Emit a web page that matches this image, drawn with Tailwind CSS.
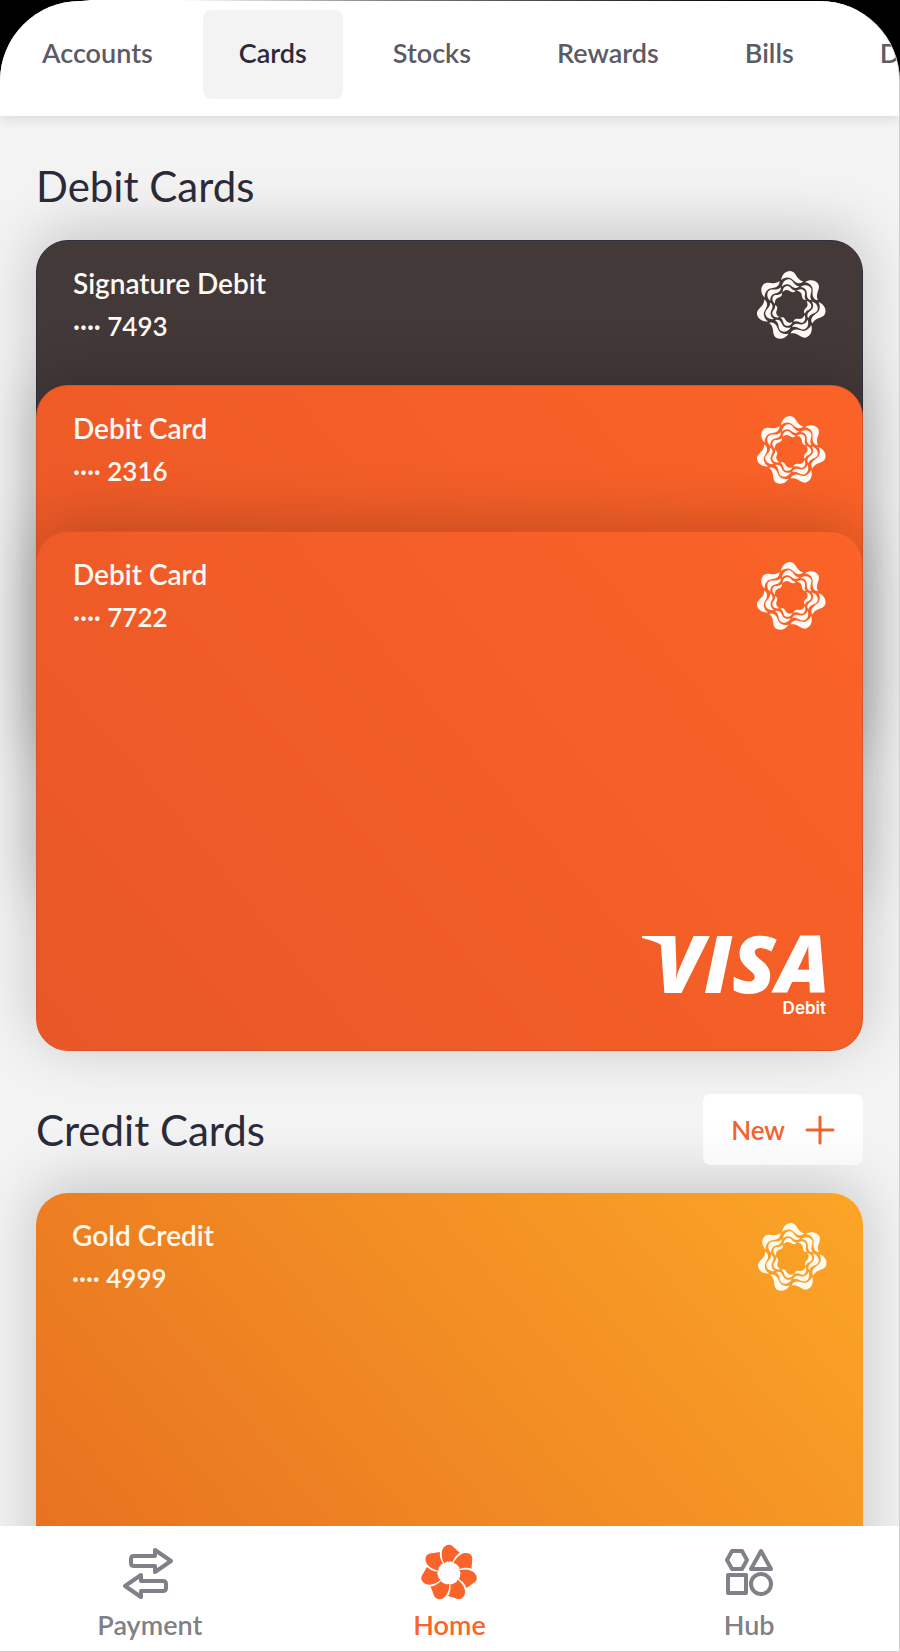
<!DOCTYPE html>
<html lang="en">
<head>
  <meta charset="UTF-8">
  <meta name="viewport" content="width=device-width, initial-scale=1.0">
  <title>Cards</title>
  <script src="https://cdn.jsdelivr.net/npm/@tailwindcss/browser@4"></script>
</head>
<body class="bg-black font-['Lato',sans-serif] text-[28px] leading-8 font-semibold">
  <!-- Shared shapes -->
  <svg class="hidden">
    <defs>
      <path id="wave" d="M-29-75C-27-91-16-102-3-102C9-102 13-91 19-83C24-76 30-73 36-72C30-65 20-65 13-70C5-76 0-83-9-83C-18-83-24-80-29-75Z" />
      <g id="wave-set">
        <use href="#wave" />
        <use href="#wave" transform="rotate(-4) scale(.77)" />
        <use href="#wave" transform="rotate(-10) scale(.58)" />
      </g>
      <symbol id="rosette" viewBox="-102 -102 204 204">
        <use href="#wave-set" />
        <use href="#wave-set" transform="rotate(51.43)" />
        <use href="#wave-set" transform="rotate(102.86)" />
        <use href="#wave-set" transform="rotate(154.29)" />
        <use href="#wave-set" transform="rotate(205.71)" />
        <use href="#wave-set" transform="rotate(257.14)" />
        <use href="#wave-set" transform="rotate(308.57)" />
      </symbol>
      <path id="petal" d="M-15-29C-20-40-24-50-22-64C-20-78-10-87 0-87C8-87 13-81 19-75L33-62C23-56 15-46 11-32C7-36 3-37-1-34C-5-37-10-34-15-29Z" />
    </defs>
  </svg>

  <div class="min-h-screen flex flex-col bg-[linear-gradient(90deg,#000_9%,#fff_10%,#fff_20%,#777_45%,#000_85%)] bg-[length:100%_81px] bg-no-repeat pt-px">
    <div class="h-[1651px] max-h-[calc(100vh-1px)] flex flex-col flex-1 overflow-hidden rounded-t-[80px] bg-[#f3f3f3] border-r border-b border-[#cfcfcf]">
      <!-- Tabs -->
      <nav class="relative z-10 shrink-0 flex gap-3.5 overflow-hidden bg-white pl-1.5 pt-[9px] pb-[17px] text-[27px] text-[#5b5b64] shadow-[0_2px_12px_rgba(0,0,0,0.12)]">
        <button class="shrink-0 h-[89px] px-9 pb-1 rounded-lg">Accounts</button>
        <button class="shrink-0 h-[89px] px-9 pb-1 rounded-lg bg-[#f3f3f3] text-[#2c2a38]">Cards</button>
        <button class="shrink-0 h-[89px] px-9 pb-1 rounded-lg">Stocks</button>
        <button class="shrink-0 h-[89px] px-9 pb-1 rounded-lg">Rewards</button>
        <button class="shrink-0 h-[89px] px-9 pb-1 rounded-lg">Bills</button>
        <button class="shrink-0 h-[89px] px-9 pb-1 rounded-lg">D</button>
      </nav>

      <main class="flex-1 min-h-0 overflow-hidden px-9">
        <!-- Debit cards -->
        <h2 class="pt-[46px] pb-[30px] text-[42px] leading-12 font-normal text-[#2c2a38]">Debit Cards</h2>
        <div class="text-[#fff9f4]">
          <div class="flex h-[520px] items-start justify-between rounded-[32px] border border-[#2f303c] bg-[#423938] px-9 py-[26px] shadow-[0_-8px_60px_rgba(0,0,0,0.2)]">
            <div>
              <p>Signature Debit</p>
              <p class="mt-[11px] text-[26px]">···· 7493</p>
            </div>
            <svg class="mt-1 size-[70px]" fill="currentColor"><use href="#rosette" /></svg>
          </div>
          <div class="-mt-[375px] flex h-[520px] items-start justify-between rounded-[32px] border border-[#dc5424] bg-linear-50 from-[#e95728] to-[#fb6327] px-9 py-[26px] shadow-[0_-8px_60px_rgba(0,0,0,0.2)]">
            <div>
              <p>Debit Card</p>
              <p class="mt-[11px] text-[26px]">···· 2316</p>
            </div>
            <svg class="mt-1 size-[70px]" fill="currentColor"><use href="#rosette" /></svg>
          </div>
          <div class="-mt-[374px] flex h-[520px] flex-col justify-between rounded-[32px] border border-[#dc5424] bg-linear-50 from-[#e95728] to-[#fb6327] px-9 pt-[26px] pb-8 shadow-[0_-8px_60px_rgba(0,0,0,0.2)]">
            <div class="flex items-start justify-between">
              <div>
                <p>Debit Card</p>
                <p class="mt-[11px] text-[26px]">···· 7722</p>
              </div>
              <svg class="mt-1 size-[70px]" fill="currentColor"><use href="#rosette" /></svg>
            </div>
            <div class="self-end text-right text-white">
              <p class="relative -mr-1 font-['Open_Sans',sans-serif] text-[80px] leading-[72px] font-extrabold italic">
                <svg class="absolute -left-3 top-[10px] h-3 w-8" viewBox="0 0 32 12" fill="currentColor"><path d="M0 0h27q4 0 5 4v8H22Q18 6 0 2Z" /></svg>VISA</p>
              <p class="font-['Inter',sans-serif] text-[17px] leading-5 font-semibold">Debit</p>
            </div>
          </div>
        </div>

        <!-- Credit cards -->
        <div class="mt-[43px] flex items-center justify-between">
          <h2 class="text-[42px] leading-12 font-normal text-[#2c2a38]">Credit Cards</h2>
          <button class="flex h-[71px] items-center gap-5 rounded-lg bg-linear-to-b from-white from-40% to-[#f8f8f8] px-7 text-[26px] text-[#f2622d]">
            New
            <svg class="size-[30px]" viewBox="0 0 30 30" fill="none" stroke="currentColor" stroke-width="3" stroke-linecap="round"><path d="M15 2v26M2 15h26" /></svg>
          </button>
        </div>
        <div class="mt-7 flex h-[520px] items-start justify-between rounded-[32px] bg-linear-50 from-[#e56a1f] via-[#f08823] to-[#fba526] px-9 py-[26px] text-[#fff9ec] shadow-[0_-8px_60px_rgba(0,0,0,0.2)]">
          <div>
            <p>Gold Credit</p>
            <p class="mt-[11px] text-[26px]">···· 4999</p>
          </div>
          <svg class="mt-1 size-[70px]" fill="currentColor"><use href="#rosette" /></svg>
        </div>
      </main>

      <!-- Bottom bar -->
      <nav class="relative z-10 grid shrink-0 grid-cols-3 bg-white pt-[17px] pb-[10px] text-[27px] text-[#818088]">
        <a href="#" class="flex flex-col items-center gap-1.5">
          <svg class="size-[60px]" viewBox="0 0 60 60" fill="none" stroke="currentColor" stroke-width="4" stroke-linejoin="round">
            <path d="M14 13h21v-6l16 11-16 11v-6h-21q-3 0-3-3v-4q0-3 3-3z" />
            <path d="M43 38h-22v-6l-16 11 16 11v-6h22q3 0 3-3v-4q0-3-3-3z" />
          </svg>
          Payment
        </a>
        <a href="#" class="flex flex-col items-center gap-1.5 text-[#fa632a]">
          <svg class="size-[60px]" viewBox="-92 -92 184 184" fill="currentColor">
            <use href="#petal" />
            <use href="#petal" transform="rotate(51.43)" />
            <use href="#petal" transform="rotate(102.86)" />
            <use href="#petal" transform="rotate(154.29)" />
            <use href="#petal" transform="rotate(205.71)" />
            <use href="#petal" transform="rotate(257.14)" />
            <use href="#petal" transform="rotate(308.57)" />
          </svg>
          Home
        </a>
        <a href="#" class="flex flex-col items-center gap-1.5">
          <svg class="size-[60px]" viewBox="0 0 60 60" fill="none" stroke="currentColor" stroke-width="4" stroke-linejoin="round">
            <path d="M13 8h10l5 9-5 9h-10l-5-9z" />
            <path d="M42 8l10 18h-20z" />
            <rect x="9" y="32" width="18" height="18" />
            <circle cx="42" cy="41" r="10" />
          </svg>
          Hub
        </a>
      </nav>
    </div>
  </div>
</body>
</html>
